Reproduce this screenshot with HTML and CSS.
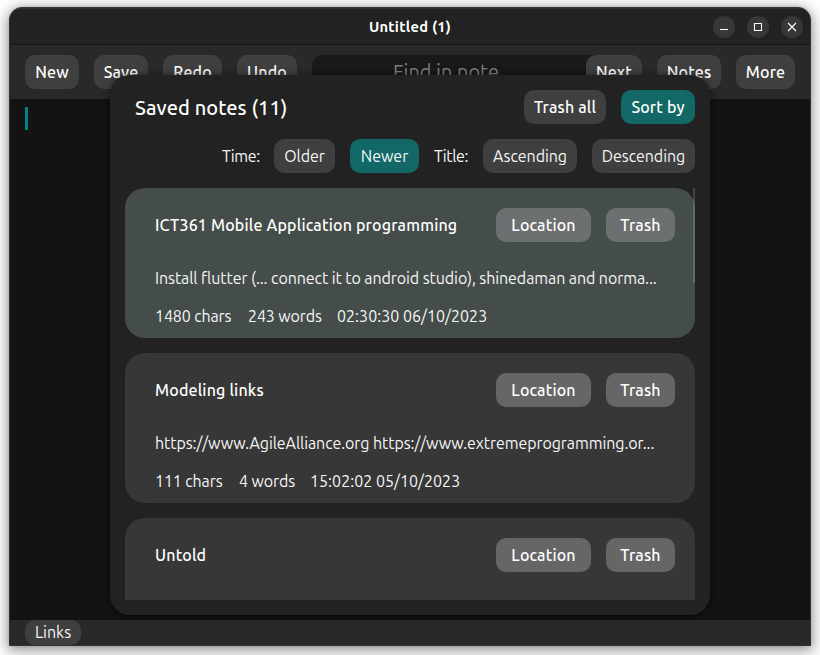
FILE: index.html
```html
<!DOCTYPE html>
<html lang="en">
<head>
<meta charset="utf-8">
<title>Untitled (1)</title>
<link rel="stylesheet" href="styles.css">
</head>
<body>
<div class="window">
  <header class="titlebar">
    <h1 class="window-title">Untitled (1)</h1>
    <div class="controls">
      <span class="control"><svg viewBox="0 0 22 22"><path d="M7 13.5h8"/></svg></span>
      <span class="control"><svg viewBox="0 0 22 22"><path d="M7.5 7.5h7v7h-7z"/></svg></span>
      <span class="control"><svg viewBox="0 0 22 22"><path d="M7 7l8 8M15 7l-8 8"/></svg></span>
    </div>
  </header>
  <nav class="toolbar">
    <button class="btn w-new">New</button>
    <button class="btn w-save">Save</button>
    <button class="btn w-redo">Redo</button>
    <button class="btn w-undo">Undo</button>
    <div class="find">
      <span class="find-field">Find in note</span>
      <button class="btn w-next">Next</button>
    </div>
    <button class="btn w-notes">Notes</button>
    <button class="btn w-more">More</button>
  </nav>
  <main class="editor"><div class="caret"></div></main>
  <footer class="statusbar"><span class="links">Links</span></footer>

  <section class="dialog">
    <div class="dialog-head">
      <h2 class="dialog-title">Saved notes (11)</h2>
      <button class="btn w-trashall">Trash all</button>
      <button class="btn accent w-sort">Sort by</button>
    </div>
    <div class="sort-row">
      <span class="label w-time">Time:</span>
      <button class="btn light w-older">Older</button>
      <button class="btn light accent w-newer">Newer</button>
      <span class="label w-title">Title:</span>
      <button class="btn light w-asc">Ascending</button>
      <button class="btn light w-desc">Descending</button>
    </div>
    <div class="list">
      <article class="note current">
        <div class="note-head">
          <h3>ICT361 Mobile Application programming</h3>
          <button class="btn soft w-loc">Location</button>
          <button class="btn soft w-trash">Trash</button>
        </div>
        <p class="preview">Install flutter (... connect it to android studio), shinedaman and norma...</p>
        <div class="meta"><span class="m1">1480 chars</span><span class="m2">243 words</span><span class="date">02:30:30 06/10/2023</span></div>
      </article>
      <article class="note">
        <div class="note-head">
          <h3>Modeling links</h3>
          <button class="btn soft w-loc">Location</button>
          <button class="btn soft w-trash">Trash</button>
        </div>
        <p class="preview">https://www.AgileAlliance.org https://www.extremeprogramming.or...</p>
        <div class="meta"><span class="m3">111 chars</span><span class="m4">4 words</span><span class="date">15:02:02 05/10/2023</span></div>
      </article>
      <article class="note">
        <div class="note-head">
          <h3>Untold</h3>
          <button class="btn soft w-loc">Location</button>
          <button class="btn soft w-trash">Trash</button>
        </div>
      </article>
      <div class="scrollbar"></div>
    </div>
  </section>
</div>
</body>
</html>
```
FILE: styles.css
```css
* { box-sizing: border-box; }
html { height: 100%; background: #fff; overflow: hidden; }
body {
  margin: 0;
  padding: 7px 9px 9px;
  height: 655px;
  font-family: Ubuntu, "Noto Sans", sans-serif;
  font-size: 16px;
  color: #fff;
  overflow: hidden;
}
h1, h2, h3, p { margin: 0; }

.window {
  position: relative;
  display: flex;
  flex-direction: column;
  width: 802px;
  height: 639px;
  border: 1px solid #333;
  border-radius: 13px 13px 0 0;
  background: #292929;
  box-shadow: 0 3px 14px 2px rgba(0,0,0,.4), 0 0 3px rgba(0,0,0,.15);
}
.titlebar {
  height: 37px;
  flex: none;
  display: grid;
  grid-template-columns: 1fr auto 1fr;
  align-items: center;
  background: #222;
  border-top: 1px solid #303030;
  border-bottom: 1px solid #151515;
  border-radius: 12px 12px 0 0;
}
.window-title { grid-column: 2; font-size: 14.67px; font-weight: 700; line-height: 20px; letter-spacing: .25px; }
.controls { display: flex; gap: 12px; justify-self: end; padding-right: 7px; }
.control { width: 22px; height: 22px; border-radius: 50%; background: #373737; }
.control svg { display: block; width: 22px; height: 22px; fill: none; stroke: #fff; stroke-width: 1.1; }

.toolbar { height: 54px; flex: none; display: flex; gap: 15px; padding: 10px 15px; background: #292929; }
.btn {
  flex: none;
  height: 34px;
  padding: 0;
  border: 0;
  border-radius: 10px;
  background: #3f3f3f;
  color: #fff;
  font: 540 16px/35px Ubuntu, "Noto Sans", sans-serif;
  letter-spacing: .15px;
  text-align: center;
  white-space: nowrap;
}
.btn.accent { background: #126866; }
.btn.light { font-weight: 400; color: #f5f5f5; letter-spacing: -.05px; }
.btn.soft { background: #666; }
.current .btn.soft { background: #6d7071; }
.find { display: flex; width: 330px; height: 34px; background: #191919; border-radius: 10px; }
.find-field { flex: 1; text-align: center; color: #7d7d7d; font-size: 20px; line-height: 33px; padding-right: 6px; }
.w-new, .w-save { width: 54px; }
.w-redo { width: 59px; }
.w-undo { width: 60px; }
.w-next { width: 56px; }
.w-notes { width: 64px; }
.w-more { width: 59px; }
.w-trashall { width: 82px; }
.w-sort { width: 74px; }
.w-older { width: 61px; }
.w-newer { width: 69px; }
.w-asc { width: 94px; }
.w-desc { width: 103px; }
.w-loc { width: 95px; }
.w-trash { width: 69px; }

.editor { flex: 1; background: #131313; padding: 8px 15px; }
.caret { width: 3px; height: 23px; background: #00827f; }
.statusbar { height: 25px; flex: none; padding: 0 15px; background: #292929; }
.links {
  display: block;
  width: 56px;
  height: 25px;
  border-radius: 10px;
  background: #3f3f3f;
  color: #f5f5f5;
  line-height: 25px;
  text-align: center;
}

.dialog {
  position: absolute;
  left: 100px;
  top: 67px;
  width: 600px;
  height: 540px;
  padding: 15px;
  border-radius: 20px;
  background: #222;
  box-shadow: 0 1px 8px rgba(0,0,0,.6);
}
.dialog-head { display: flex; gap: 15px; height: 34px; }
.dialog-title { flex: 1; padding-left: 10px; font-size: 20px; font-weight: 540; line-height: 36px; letter-spacing: .08px; }
.sort-row { display: flex; justify-content: flex-end; gap: 15px; height: 34px; margin: 15px 0; }
.label { line-height: 35px; color: #f5f5f5; white-space: nowrap; letter-spacing: -.4px; }
.w-time { width: 37px; }
.w-title { width: 34px; }
.list { position: relative; display: flex; flex-direction: column; gap: 15px; height: 412px; overflow: hidden; }
.note { flex: none; height: 150px; padding: 20px 20px 0 30px; border-radius: 20px; background: #373737; }
.note.current { background: #454d4b; }
.note-head { display: flex; gap: 15px; height: 34px; }
.note-head h3 { flex: 1; font-size: 16px; font-weight: 540; line-height: 35px; letter-spacing: .18px; white-space: nowrap; }
.preview { margin-top: 21px; line-height: 30px; color: #f5f5f5; white-space: nowrap; letter-spacing: -.08px; }
.meta { display: flex; margin-top: 8px; line-height: 30px; color: #f5f5f5; white-space: nowrap; letter-spacing: -.12px; }
.date { letter-spacing: .03px; }
.m1 { width: 93px; }
.m2 { width: 89px; }
.m3 { width: 84px; }
.m4 { width: 71px; }
.scrollbar { position: absolute; right: 0; top: 0; width: 2px; height: 95px; background: rgba(255,255,255,.16); }
```
